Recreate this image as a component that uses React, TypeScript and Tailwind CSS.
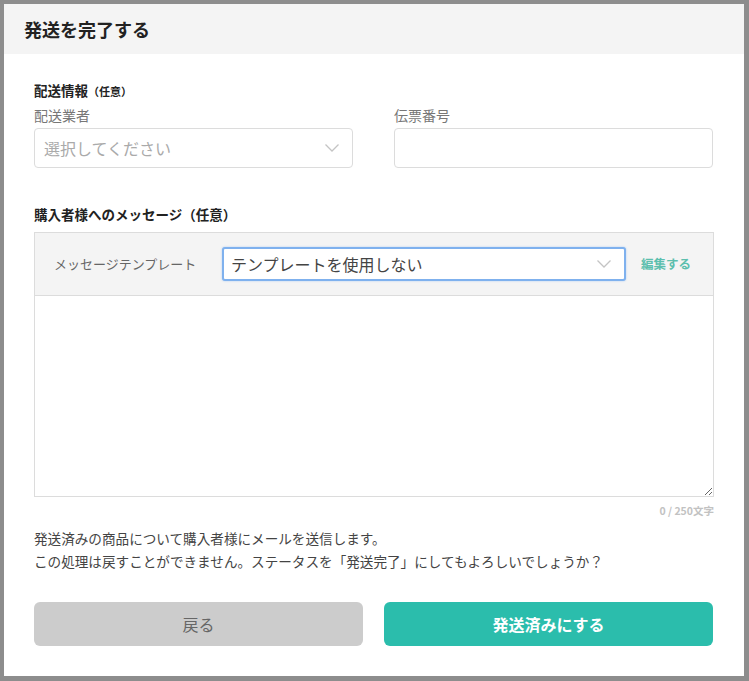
import { useState } from "react";

const font = {
  fontFamily: '"Noto Sans CJK JP", "Noto Sans", sans-serif',
};

const Chevron = () => (
  <svg width="16" height="10" viewBox="0 0 16 10" fill="none">
    <path d="M1.5 1.5 L8 8 L14.5 1.5" stroke="#c4c4c4" strokeWidth="1.3" />
  </svg>
);

export default function App() {
  const [message, setMessage] = useState("");

  return (
    <div
      className="h-[681px] w-[749px] bg-[#8d8d8d] pl-[4px] pt-[4px]"
      style={font}
    >
      <div className="flex h-[672px] w-[740px] flex-col bg-white">
        <div className="flex h-[50px] items-center bg-[#f4f4f4] px-[20px]">
          <h1 className="text-[18px] font-bold text-[#222]">発送を完了する</h1>
        </div>

        <div className="flex flex-col px-[30px] pt-[25px]">
          <div className="text-[13.5px] font-bold leading-[22px] text-[#222]">
            配送情報<span className="text-[11px]">（任意）</span>
          </div>
          <div className="mt-[2px] flex gap-[41px]">
            <div className="flex w-[319px] flex-col">
              <label className="text-[14px] leading-[22px] text-[#777]">配送業者</label>
              <div className="mt-[2px] flex h-[40px] items-center justify-between rounded-[4px] border border-[#dcdcdc] pl-[9px] pr-[12px]">
                <span className="text-[16px] text-[#aaa]">選択してください</span>
                <Chevron />
              </div>
            </div>
            <div className="flex w-[319px] flex-col">
              <label className="text-[14px] leading-[22px] text-[#777]">伝票番号</label>
              <input className="mt-[2px] h-[40px] rounded-[4px] border border-[#dcdcdc] px-[9px] text-[15px] outline-none" />
            </div>
          </div>

          <div className="mt-[35px] text-[13.5px] font-bold leading-[22px] text-[#222]">
            購入者様へのメッセージ（任意）
          </div>
          <div className="mt-[7px] flex h-[265px] w-[680px] flex-col border border-[#dcdcdc]">
            <div className="flex h-[63px] items-center border-b border-[#dcdcdc] bg-[#f4f4f4]">
              <span className="ml-[19px] w-[168px] text-[13px] text-[#666]">
                メッセージテンプレート
              </span>
              <div className="flex h-[34px] w-[404px] items-center justify-between rounded-[3px] border-2 border-[#7fb1ee] bg-white pl-[7px] pr-[12px] shadow-[0_0_2px_#a9c9f3]">
                <span className="text-[16px] text-[#444]">テンプレートを使用しない</span>
                <Chevron />
              </div>
              <span className="ml-[15px] text-[12.5px] font-bold text-[#5cbfae]">編集する</span>
            </div>
            <textarea
              value={message}
              onChange={(e) => setMessage(e.target.value)}
              className="flex-1 resize-y px-[9px] py-[6px] text-[14px] outline-none"
            />
          </div>
          <div className="mt-[6px] w-[680px] text-right text-[10.5px] font-bold text-[#c2c2c2]">
            {message.length} / 250文字
          </div>

          <p className="mt-[8px] text-[13.6px] leading-[23px] text-[#444]">
            発送済みの商品について購入者様にメールを送信します。
            <br />
            この処理は戻すことができません。ステータスを「発送完了」にしてもよろしいでしょうか？
          </p>

          <div className="mt-[29px] flex gap-[21px]">
            <button className="h-[44px] w-[329px] rounded-[6px] bg-[#cccccc] text-[16px] text-[#666]">
              戻る
            </button>
            <button className="h-[44px] w-[329px] rounded-[6px] bg-[#2bbdac] text-[16px] font-bold text-white">
              発送済みにする
            </button>
          </div>
        </div>
      </div>
    </div>
  );
}
